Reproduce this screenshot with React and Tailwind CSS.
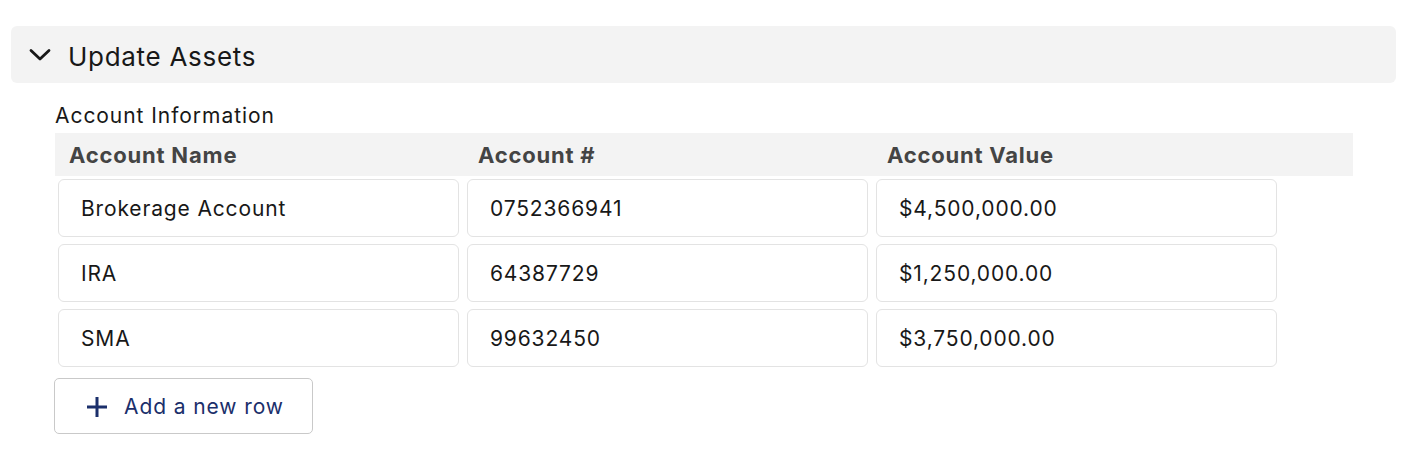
import { useState } from 'react';

const rows = [
  { name: 'Brokerage Account', number: '0752366941', value: '$4,500,000.00' },
  { name: 'IRA', number: '64387729', value: '$1,250,000.00' },
  { name: 'SMA', number: '99632450', value: '$3,750,000.00' },
];

function Cell({ value }) {
  return (
    <div className="h-[58px] w-[401px] rounded-md border border-[#e3e3e3] bg-white flex items-center pl-[22px] pt-[2px] text-[21px] tracking-[0.85px] text-[#181818]">
      {value}
    </div>
  );
}

export default function App() {
  const [open] = useState(true);
  return (
    <div className="w-[1416px] h-[456px] bg-white pt-[26px] px-[11px] font-['Inter',sans-serif]">
      {/* section header */}
      <div className="h-[57px] w-[1385px] rounded-md bg-[#f3f3f3] flex items-center pl-[18px] pt-[3px]">
        <svg width="22" height="14" viewBox="0 0 22 14" fill="none" className="mr-[17px] -mt-[3px]">
          <path d="M2 2.5 L11 11 L20 2.5" stroke="#181818" strokeWidth="2.8" strokeLinecap="round" strokeLinejoin="round" />
        </svg>
        <span className="text-[26px] text-[#181818] tracking-[0.7px]">Update Assets</span>
      </div>

      {open && (
        <div className="pl-[44px] pt-[19px]">
          <div className="text-[21px] text-[#181818] leading-[28px] tracking-[0.95px]">Account Information</div>

          <div className="w-[1298px] mt-[3px]">
            <div className="h-[43px] bg-[#f3f3f3] flex items-center pt-[2px] text-[22px] font-bold tracking-[0.8px] text-[#444444]">
              <div className="w-[409px] pl-[14px]">Account Name</div>
              <div className="w-[409px] pl-[14px]">Account #</div>
              <div className="w-[409px] pl-[14px]">Account Value</div>
            </div>

            <div className="flex flex-col gap-[7px] pt-[3px]">
              {rows.map((r) => (
                <div key={r.name} className="flex gap-[8px] pl-[3px]">
                  <Cell value={r.name} />
                  <Cell value={r.number} />
                  <Cell value={r.value} />
                </div>
              ))}
            </div>
          </div>

          <button className="mt-[11px] -ml-px h-[56px] w-[259px] rounded-[5px] border border-[#c9c9c9] bg-white flex items-center pl-[31px] pt-[2px] text-[21px] tracking-[0.9px] text-[#1b2f6b]">
            <svg width="22" height="22" viewBox="0 0 22 22" fill="none" className="mr-[16px]">
              <path d="M11 1 V21 M1 11 H21" stroke="#1b2f6b" strokeWidth="3" />
            </svg>
            Add a new row
          </button>
        </div>
      )}
    </div>
  );
}
